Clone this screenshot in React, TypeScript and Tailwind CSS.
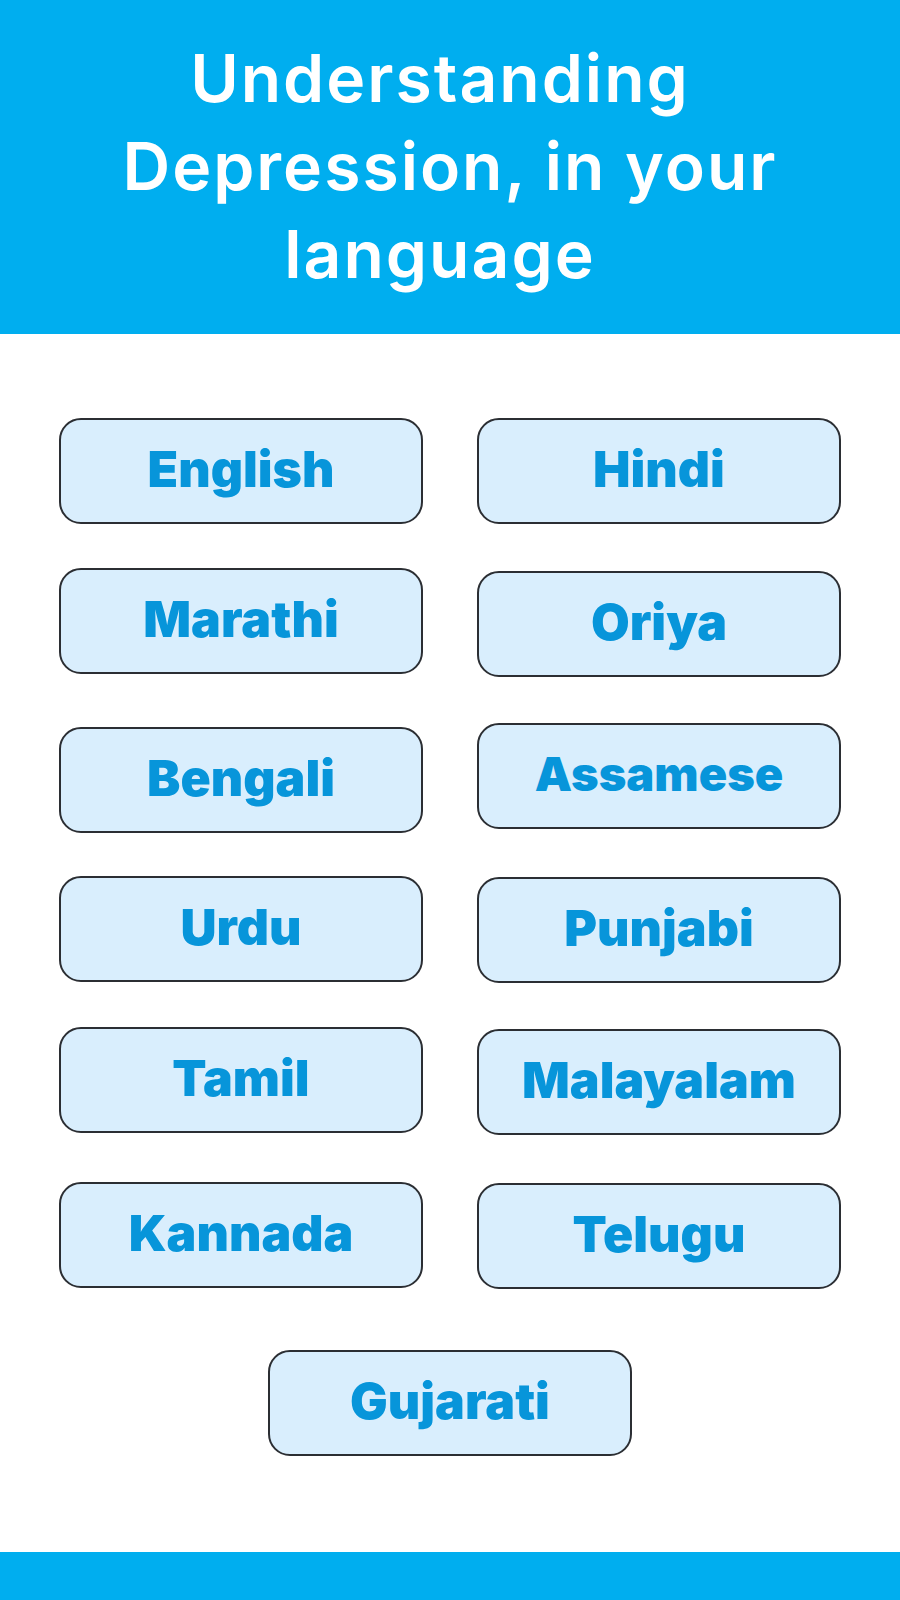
const left = [
  { name: "English", mt: "mt-0" },
  { name: "Marathi", mt: "mt-[44px]" },
  { name: "Bengali", mt: "mt-[53px]" },
  { name: "Urdu", mt: "mt-[43px]" },
  { name: "Tamil", mt: "mt-[45px]" },
  { name: "Kannada", mt: "mt-[49px]" },
];

const right = [
  { name: "Hindi", mt: "mt-0" },
  { name: "Oriya", mt: "mt-[47px]" },
  { name: "Assamese", mt: "mt-[46px]", small: true },
  { name: "Punjabi", mt: "mt-[48px]" },
  { name: "Malayalam", mt: "mt-[46px]" },
  { name: "Telugu", mt: "mt-[48px]" },
];

const LangButton = ({
  name,
  small = false,
  className = "",
}: {
  name: string;
  small?: boolean;
  className?: string;
}) => (
  <button
    className={`flex h-[106px] w-[364px] items-center justify-center rounded-[22px] border-2 border-[#2b2e33] bg-[#d9eefd] pb-[4px] font-black text-[#0795da] ${
      small ? "text-[47px]" : "text-[50px]"
    } ${className}`}
  >
    {name}
  </button>
);

export default function App() {
  return (
    <div className="flex min-h-[1600px] w-[900px] flex-col bg-white font-['Inter','Open_Sans',sans-serif]">
      <header className="flex h-[334px] flex-col items-center bg-[#00aeef] pt-[34px] text-[66px] font-semibold leading-[88px] tracking-[2px] text-white">
        <span className="pr-[20px]">Understanding</span>
        <span>Depression, in your</span>
        <span className="pr-[20px]">language</span>
      </header>

      <main className="flex flex-1 flex-col items-center pt-[84px]">
        <div className="flex gap-[54px]">
          <div className="flex flex-col">
            {left.map((l) => (
              <LangButton key={l.name} name={l.name} className={l.mt} />
            ))}
          </div>
          <div className="flex flex-col">
            {right.map((r) => (
              <LangButton
                key={r.name}
                name={r.name}
                small={r.small}
                className={r.mt}
              />
            ))}
          </div>
        </div>
        <LangButton name="Gujarati" className="mt-[61px]" />
      </main>

      <footer className="h-[48px] bg-[#00aeef]" />
    </div>
  );
}
